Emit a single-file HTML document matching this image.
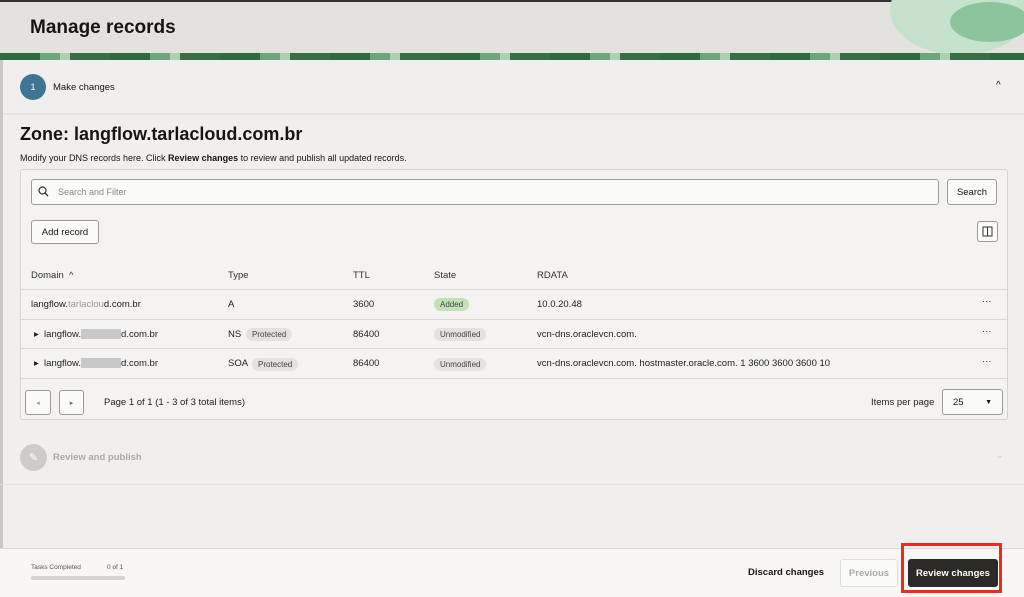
<!DOCTYPE html><html><head><style>
*{box-sizing:border-box;margin:0;padding:0}
body{width:1024px;height:597px;overflow:hidden;background:#f1efed;font-family:"Liberation Sans",sans-serif;color:#161513;position:relative;font-size:10px}
.a{position:absolute}
.hdr{left:0;top:0;width:1024px;height:54px;background:#e4e2de;border-top:2px solid #333}
.band{left:0;top:53px;width:1024px;height:7px;background:repeating-linear-gradient(90deg,#2f6b3c 0 40px,#6fa57a 40px 60px,#a9d2ae 60px 70px,#3a6e45 70px 110px)}
.btn{position:absolute;border:1px solid #9e9a96;border-radius:3px;background:#fbfbfa;font-size:10px;display:flex;align-items:center;justify-content:center}
.hd{font-size:9.5px;color:#333}
.cell{position:absolute;font-size:9.5px;color:#222}
.tag{position:absolute;border-radius:8px;background:#e4e2df;font-size:8px;padding:2px 6px;color:#444}
.line{position:absolute;left:21px;width:986px;height:1px;background:#dcd9d5}
.blur{display:inline-block;width:40px;height:10px;background:#c8c8c8;vertical-align:middle}
</style></head><body>
<div class="a hdr"></div>
<svg class="a" style="left:880px;top:0" width="144" height="56"><ellipse cx="80" cy="10" rx="70" ry="45" fill="#c5e2cc"/><ellipse cx="110" cy="22" rx="40" ry="20" fill="#8cc59b"/></svg>
<div class="a" style="left:30px;top:17px;font-size:19px;font-weight:bold">Manage records</div>
<div class="a band"></div>
<div class="a" style="left:0;top:60px;width:3px;height:490px;background:#c9c7c3"></div>
<div class="a" style="left:20px;top:74px;width:26px;height:26px;border-radius:50%;background:#3e7592;color:#fff;font-size:9px;display:flex;align-items:center;justify-content:center">1</div>
<div class="a" style="left:53px;top:82px;font-size:9.5px">Make changes</div>
<div class="a" style="left:996px;top:80px;font-size:10px">^</div>
<div class="a" style="left:3px;top:113px;width:1021px;height:2px;background:#e6e4e1"></div>
<div class="a" style="left:20px;top:124px;font-size:18px;font-weight:bold">Zone: langflow.tarlacloud.com.br</div>
<div class="a" style="left:20px;top:153px;font-size:9px">Modify your DNS records here. Click <b>Review changes</b> to review and publish all updated records.</div>
<div class="a" style="left:20px;top:169px;width:988px;height:251px;border:1px solid #d6d3cf;border-radius:3px;background:#f4f3f1"></div>
<div class="btn" style="left:31px;top:179px;width:908px;height:26px;justify-content:flex-start;padding-left:26px;color:#888;font-size:9px">Search and Filter</div>
<svg class="a" style="left:38px;top:186px" width="11" height="11"><circle cx="4.5" cy="4.5" r="3.5" fill="none" stroke="#333" stroke-width="1.2"/><path d="M7 7l3 3" stroke="#333" stroke-width="1.3"/></svg>
<div class="btn" style="left:947px;top:179px;width:50px;height:26px;font-size:9.5px">Search</div>
<div class="btn" style="left:31px;top:220px;width:68px;height:24px;font-size:9.5px">Add record</div>
<div class="btn" style="left:977px;top:221px;width:21px;height:21px"><svg width="11" height="11"><rect x="1" y="1" width="9" height="9" fill="none" stroke="#333"/><path d="M5.5 1v9" stroke="#333"/></svg></div>
<div class="a hd" style="left:31px;top:270px">Domain &nbsp;^</div>
<div class="a hd" style="left:228px;top:270px">Type</div>
<div class="a hd" style="left:353px;top:270px">TTL</div>
<div class="a hd" style="left:434px;top:270px">State</div>
<div class="a hd" style="left:537px;top:270px">RDATA</div>
<div class="line" style="top:289px"></div>
<div class="cell" style="left:31px;top:299px">langflow.<span style="color:#999">tarlaclou</span>d.com.br</div>
<div class="cell" style="left:228px;top:299px">A</div>
<div class="cell" style="left:353px;top:299px">3600</div>
<div class="tag" style="left:434px;top:298px;background:#c2e1b4">Added</div>
<div class="cell" style="left:537px;top:299px">10.0.20.48</div>
<div class="cell" style="left:982px;top:296px">···</div>
<div class="line" style="top:319px"></div>
<div class="cell" style="left:34px;top:329px">▸ &nbsp;langflow.<span class="blur"></span>d.com.br</div>
<div class="cell" style="left:228px;top:329px">NS</div>
<div class="tag" style="left:246px;top:328px">Protected</div>
<div class="cell" style="left:353px;top:329px">86400</div>
<div class="tag" style="left:434px;top:328px">Unmodified</div>
<div class="cell" style="left:537px;top:329px">vcn-dns.oraclevcn.com.</div>
<div class="cell" style="left:982px;top:326px">···</div>
<div class="line" style="top:348px"></div>
<div class="cell" style="left:34px;top:358px">▸ &nbsp;langflow.<span class="blur"></span>d.com.br</div>
<div class="cell" style="left:228px;top:358px">SOA</div>
<div class="tag" style="left:252px;top:358px">Protected</div>
<div class="cell" style="left:353px;top:358px">86400</div>
<div class="tag" style="left:434px;top:358px">Unmodified</div>
<div class="cell" style="left:537px;top:358px">vcn-dns.oraclevcn.com. hostmaster.oracle.com. 1 3600 3600 3600 10</div>
<div class="cell" style="left:982px;top:356px">···</div>
<div class="line" style="top:378px"></div>
<div class="btn" style="left:25px;top:390px;width:26px;height:25px;color:#999;font-size:7px">◂</div>
<div class="btn" style="left:59px;top:390px;width:25px;height:25px;color:#666;font-size:7px">▸</div>
<div class="cell" style="left:104px;top:397px">Page 1 of 1 (1 - 3 of 3 total items)</div>
<div class="cell" style="left:871px;top:397px">Items per page</div>
<div class="btn" style="left:942px;top:389px;width:61px;height:26px;justify-content:space-between;padding:0 10px;font-size:9.5px"><span>25</span><span style="font-size:7px">▼</span></div>
<div class="a" style="left:20px;top:444px;width:27px;height:27px;border-radius:50%;background:#cdcbc8;color:#fff;font-size:11px;display:flex;align-items:center;justify-content:center">✎</div>
<div class="a" style="left:53px;top:452px;font-size:9.5px;font-weight:bold;color:#aaa">Review and publish</div>
<div class="a" style="left:996px;top:450px;font-size:9px;color:#ccc">⌄</div>
<div class="a" style="left:0;top:484px;width:1024px;height:1px;background:#e2e0dd"></div>
<div class="a" style="left:0;top:548px;width:1024px;height:49px;background:#f8f7f6;border-top:1px solid #dcd9d5"></div>
<div class="a" style="left:31px;top:564px;font-size:6.5px;color:#555">Tasks Completed</div>
<div class="a" style="left:107px;top:564px;font-size:6.5px;color:#555">0 of 1</div>
<div class="a" style="left:31px;top:576px;width:94px;height:4px;border-radius:2px;background:#d6d4d1"></div>
<div class="a" style="left:748px;top:567px;font-size:9.5px;font-weight:bold">Discard changes</div>
<div class="btn" style="left:840px;top:559px;width:58px;height:28px;color:#aaa;font-weight:bold;border-color:#ddd;font-size:9.5px">Previous</div>
<div class="a" style="left:901px;top:543px;width:101px;height:50px;border:3px solid #ee2a1e"></div>
<div class="btn" style="left:908px;top:559px;width:90px;height:28px;background:#2b2a28;border-color:#2b2a28;color:#fff;font-weight:bold;font-size:9.5px">Review changes</div>
</body></html>
